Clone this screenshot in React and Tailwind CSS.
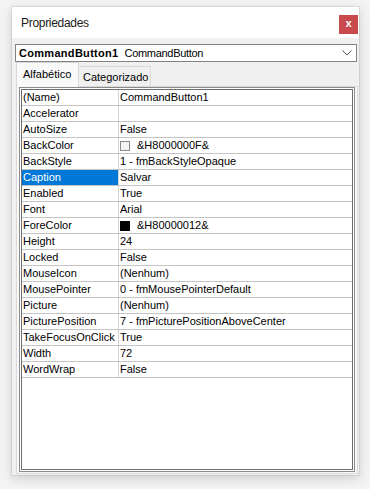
import React from 'react'

const rows = [
  ['(Name)', 'CommandButton1'],
  ['Accelerator', ''],
  ['AutoSize', 'False'],
  ['BackColor', '&H8000000F&', 'light'],
  ['BackStyle', '1 - fmBackStyleOpaque'],
  ['Caption', 'Salvar'],
  ['Enabled', 'True'],
  ['Font', 'Arial'],
  ['ForeColor', '&H80000012&', 'dark'],
  ['Height', '24'],
  ['Locked', 'False'],
  ['MouseIcon', '(Nenhum)'],
  ['MousePointer', '0 - fmMousePointerDefault'],
  ['Picture', '(Nenhum)'],
  ['PicturePosition', '7 - fmPicturePositionAboveCenter'],
  ['TakeFocusOnClick', 'True'],
  ['Width', '72'],
  ['WordWrap', 'False'],
]

function PropRow({ name, value, swatch }) {
  const selected = name === 'Caption'
  return (
    <div className="flex h-[16px] border-b border-[#c4c4c4]">
      <div
        className={
          selected
            ? 'w-[96px] pl-[1px] flex items-center bg-[#0078d7] text-white'
            : 'w-[96px] pl-[1px] flex items-center text-black'
        }
      >
        {name}
      </div>
      <div className="flex-1 pl-[1px] flex items-center border-l border-[#d4d4d4] text-black">
        {swatch === 'light' && (
          <span className="w-[10px] h-[10px] mr-[7px] border border-[#8a8a8a] bg-[#f3f3f3]" />
        )}
        {swatch === 'dark' && (
          <span className="w-[10px] h-[10px] mr-[7px] border border-black bg-black" />
        )}
        {value}
      </div>
    </div>
  )
}

export default function App() {
  return (
    <div
      className="w-[370px] h-[489px] bg-[#f3f3f3] pt-[7px] pl-[12px] overflow-hidden"
      style={{ fontFamily: '"Liberation Sans", Arial, sans-serif' }}
    >
      <div className="w-[347px] h-[468px] flex flex-col bg-[#f0f0f0] shadow-[0_0_0_1px_rgba(0,0,0,0.07),0_3px_10px_rgba(0,0,0,0.16)]">
        {/* Title bar */}
        <div className="h-[31px] bg-white flex justify-between">
          <div className="pl-[9px] flex items-center text-[12px] tracking-[-0.3px] text-[#1a1a1a]">
            Propriedades
          </div>
          <div className="w-[19px] h-[19px] mt-[8px] mr-[1px] bg-[#c94a4c] text-white text-[11px] font-bold flex items-center justify-center leading-none pb-[2px]">
            x
          </div>
        </div>

        {/* Body */}
        <div className="flex-1 flex flex-col pt-[6px] pl-[3px] pr-[1px] pb-[1px]">
          {/* Object combo */}
          <div className="h-[18px] mr-[1px] border border-[#828282] bg-white flex items-center pl-[3px] pr-[4px] text-[11px] text-black">
            <span className="font-bold tracking-[0.3px]">CommandButton1</span>
            <span className="ml-[6px] tracking-[-0.3px]">CommandButton</span>
            <svg className="ml-auto" width="10" height="6" viewBox="0 0 10 6">
              <path d="M0.5 0.5 L5 5 L9.5 0.5" fill="none" stroke="#555" strokeWidth="1" />
            </svg>
          </div>

          {/* Tabs */}
          <div className="flex items-end ml-[1px] text-[11px] text-black">
            <div className="relative z-10 -mb-px w-[63px] h-[25px] bg-[#f9f9f9] border border-b-0 border-[#d9d9d9] flex items-center pl-[6px] pb-[1px]">
              Alfabético
            </div>
            <div className="w-[72px] h-[20px] bg-[#f0f0f0] border border-l-0 border-b-0 border-[#d9d9d9] flex items-center pl-[4px] pt-[1px]">
              Categorizado
            </div>
          </div>

          {/* Tab panel */}
          <div className="flex-1 flex flex-col ml-[1px] border border-[#d9d9d9] bg-[#f9f9f9] px-[2px] pb-[1px]">
            <div className="flex-1 flex flex-col border border-[#8a8a8a] bg-white p-px">
              <div className="flex-1 border border-[#6e6e6e] bg-white text-[11px]">
                {rows.map(([name, value, swatch]) => (
                  <PropRow key={name} name={name} value={value} swatch={swatch} />
                ))}
              </div>
            </div>
          </div>
        </div>
      </div>
    </div>
  )
}
